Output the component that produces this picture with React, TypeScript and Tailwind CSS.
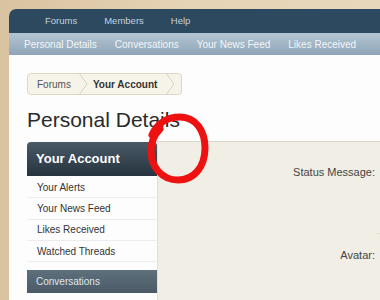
import React from "react";

const Chevron = () => (
  <svg width="10" height="22" viewBox="0 0 10 22" className="shrink-0">
    <path d="M1 0 L9 11 L1 22" fill="none" stroke="#d6d1bf" strokeWidth="1" />
  </svg>
);

export default function App() {
  const font = { fontFamily: '"Liberation Sans", Arial, sans-serif' };
  return (
    <div
      className="relative w-[380px] h-[300px] overflow-hidden bg-gradient-to-r from-[#d9c3a0] via-[#e6d4b6] to-[#e8d7bb] pl-[9px] pt-[9px]"
      style={font}
    >
      <div className="h-full w-[371px] rounded-tl-[7px] overflow-hidden bg-[#fdfdfd] flex flex-col">
        {/* top nav */}
        <div className="h-[24px] shrink-0 bg-[#2c4960] flex items-center pl-[36px] gap-[27px] text-[9.5px] text-[#c5d2dd]">
          <span>Forums</span>
          <span>Members</span>
          <span>Help</span>
        </div>
        {/* sub nav */}
        <div className="h-[22px] shrink-0 bg-gradient-to-b from-[#b4c5d2] to-[#8ea5b7] flex items-center pl-[15px] gap-[18px] text-[10px] text-[#f3f6f8] whitespace-nowrap">
          <span>Personal Details</span>
          <span>Conversations</span>
          <span>Your News Feed</span>
          <span>Likes Received</span>
        </div>
        {/* content */}
        <div className="flex-1 flex flex-col pl-[18px] pt-[18px]">
          {/* breadcrumb */}
          <div className="flex items-center h-[22px] w-[155px] border border-[#dcd8c6] rounded-[4px] bg-[#f6f3e8] text-[10px]">
            <span className="pl-[9px] pr-[7px] text-[#555]">Forums</span>
            <Chevron />
            <span className="pl-[5px] pr-[8px] font-bold text-[#333] whitespace-nowrap">Your Account</span>
            <Chevron />
          </div>
          {/* heading */}
          <h1 className="mt-[12px] text-[21px] leading-[25px] text-[#2a2a2a] font-normal">Personal Details</h1>
          {/* body */}
          <div className="mt-[9px] flex flex-1">
            {/* sidebar */}
            <div className="w-[131px] shrink-0 flex flex-col border-r border-[#dedede]">
              <div className="mt-[1px] h-[34px] rounded-t-[4px] bg-gradient-to-b from-[#4a5a67] to-[#26343f] flex items-center pl-[9px] text-[13px] font-bold text-white">
                Your Account
              </div>
              <div className="flex flex-col text-[10px] text-[#333] pt-[1px]">
                {["Your Alerts", "Your News Feed", "Likes Received", "Watched Threads"].map((t) => (
                  <div key={t} className="h-[21.3px] flex items-center pl-[9px] mx-[1px] border-b border-[#ececec]">
                    {t}
                  </div>
                ))}
              </div>
              <div className="mt-[8px] h-[23px] bg-gradient-to-b from-[#5f707d] to-[#4a5a67] flex items-center pl-[9px] text-[10px] text-[#dfe6eb]">
                Conversations
              </div>
            </div>
            {/* main panel */}
            <div className="flex-1 bg-[#f1eee5] border-t border-[#dad6c9] flex text-[11px] text-[#444]">
              <div className="w-[219px] shrink-0 flex flex-col items-end pr-[2px]">
                <div className="mt-[22px]">Status Message:</div>
                <div className="mt-[66px]">Avatar:</div>
              </div>
              <div className="flex-1 flex flex-col">
                <div className="mt-[91px] h-px bg-[#e2ded2]" />
              </div>
            </div>
          </div>
        </div>
      </div>
      {/* red hand-drawn circle */}
      <svg className="absolute left-[136px] top-[105px]" width="80" height="85" viewBox="0 0 80 85">
        <path
          d="M 16 30 C 22 16, 34 12, 44 12 C 60 12, 69 26, 69 43 C 69 62, 58 75, 42 75 C 26 75, 15 62, 15 46 C 15 38, 18 30, 24 24"
          fill="none"
          stroke="#ee1111"
          strokeWidth="7"
          strokeLinecap="round"
        />
      </svg>
    </div>
  );
}
